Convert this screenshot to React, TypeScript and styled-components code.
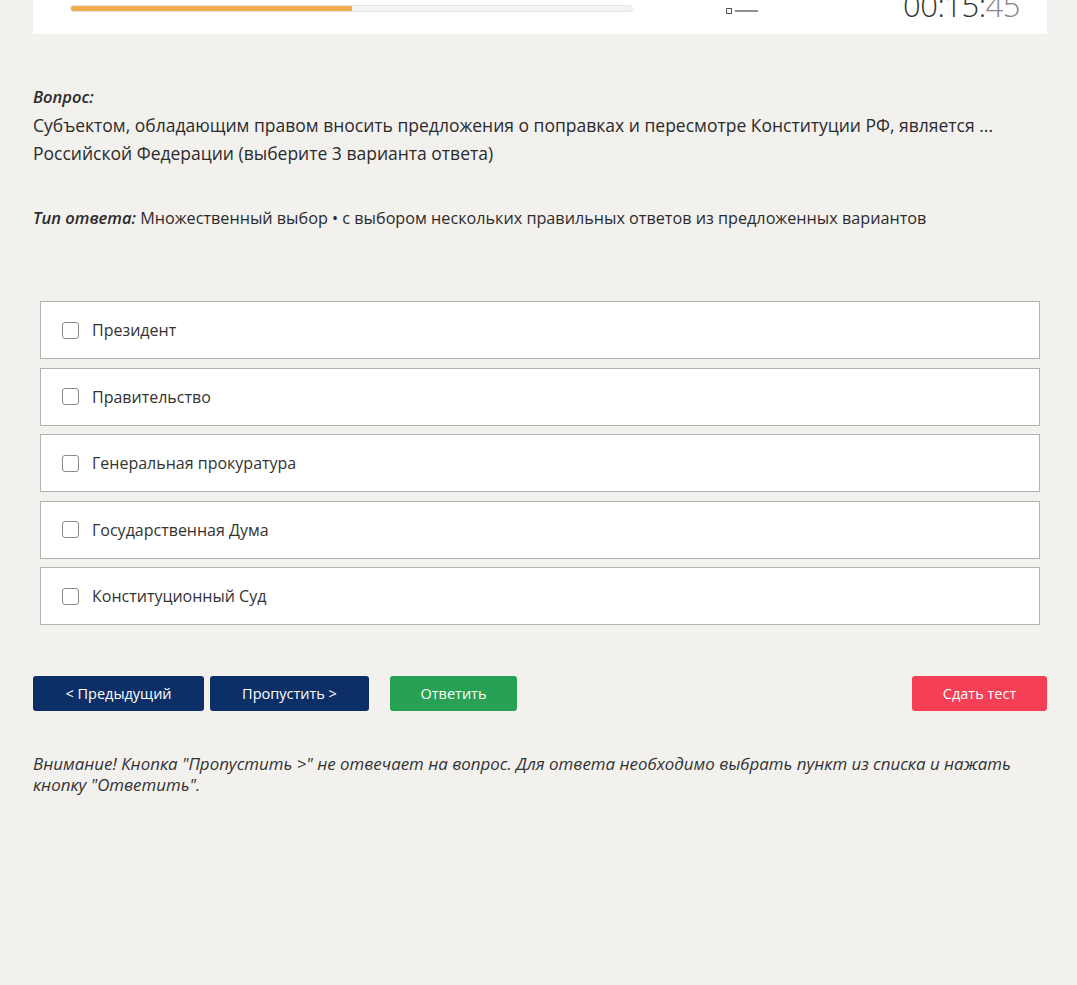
import styled, { createGlobalStyle } from 'styled-components';

const GlobalStyle = createGlobalStyle`
  html, body {
    margin: 0;
    padding: 0;
    background: #f2f1ee;
    font-family: 'Open Sans', 'Noto Sans', sans-serif;
    color: #2b2b2b;
  }
`;

const Page = styled.div`
  width: 1014px;
  margin-left: 33px;
  overflow: hidden;
`;

const HeaderCard = styled.header`
  background: #fff;
  height: 80px;
  margin-top: -46px;
  display: flex;
  align-items: flex-end;
  padding: 0 27px 22px 37px;
  box-sizing: border-box;
`;

const Progress = styled.div`
  width: 563px;
  height: 7px;
  border-radius: 4px;
  background: #f4f4f4;
  border: 1px solid #e4e4e4;
  box-sizing: border-box;
  overflow: hidden;
`;

const ProgressFill = styled.div`
  height: 100%;
  background: #f0ad4e;
`;

const ListIcon = styled.svg`
  margin-left: 93px;
  margin-bottom: -3px;
`;

const Timer = styled.div`
  margin-left: auto;
  font-size: 31px;
  font-weight: 300;
  line-height: 1;
  letter-spacing: -0.5px;
  color: #333;
  margin-bottom: -9px;

  span {
    color: #888;
  }
`;

const Question = styled.section`
  margin-top: 48px;
  font-size: 17.5px;
  line-height: 28px;
`;

const Label = styled.em`
  font-weight: 600;
  font-size: 16.5px;
`;

const AnswerType = styled.p`
  margin: 39px 0 0;
  font-size: 16.2px;
  line-height: 24px;
`;

const Options = styled.ul`
  list-style: none;
  margin: 71px 7px 0;
  padding: 0;
  display: flex;
  flex-direction: column;
  gap: 8.5px;
`;

const Option = styled.li`
  height: 58px;
  background: #fff;
  border: 1px solid #b3b3b3;
  box-sizing: border-box;
  display: flex;
  align-items: center;
  padding-left: 21px;
  font-size: 16px;
  color: #333;
`;

const Box = styled.span`
  width: 17px;
  height: 17px;
  border: 1px solid #8a8a8a;
  border-radius: 3px;
  box-sizing: border-box;
  margin-right: 13px;
  background: #fff;
`;

const Actions = styled.div`
  display: flex;
  gap: 6px;
  margin-top: 51px;
`;

const Button = styled.button<{ $tone: 'navy' | 'green' | 'red' }>`
  height: 35px;
  border: none;
  border-radius: 3px;
  font-family: inherit;
  font-size: 14.5px;
  color: #fff;
  background: ${(p) => (p.$tone === 'navy' ? '#0b2f66' : p.$tone === 'green' ? '#27a153' : '#f43f55')};
  padding: 0;
`;

const Spacer = styled.div`
  flex: 1;
`;

const Note = styled.p`
  margin: 42px 0 0;
  font-style: italic;
  font-size: 16.9px;
  line-height: 21px;
  color: #333;
`;

const options = [
  'Президент',
  'Правительство',
  'Генеральная прокуратура',
  'Государственная Дума',
  'Конституционный Суд',
];

export default function App() {
  return (
    <Page>
      <GlobalStyle />
      <HeaderCard>
        <Progress>
          <ProgressFill style={{ width: '50%' }} />
        </Progress>
        <ListIcon width="32" height="10" viewBox="0 0 32 10">
          <rect x="0.5" y="3.5" width="5" height="5" fill="none" stroke="#555" />
          <line x1="9" y1="6" x2="32" y2="6" stroke="#555" strokeWidth="1.3" />
        </ListIcon>
        <Timer>
          00:15:<span>45</span>
        </Timer>
      </HeaderCard>

      <Question>
        <Label>Вопрос:</Label>
        <br />
        Субъектом, обладающим правом вносить предложения о поправках и пересмотре Конституции РФ,
        является ... Российской Федерации (выберите 3 варианта ответа)
      </Question>

      <AnswerType>
        <Label>Тип ответа:</Label> Множественный выбор • с выбором нескольких правильных ответов из
        предложенных вариантов
      </AnswerType>

      <Options>
        {options.map((o) => (
          <Option key={o}>
            <Box />
            {o}
          </Option>
        ))}
      </Options>

      <Actions>
        <Button $tone="navy" style={{ width: 171 }}>&lt; Предыдущий</Button>
        <Button $tone="navy" style={{ width: 159 }}>Пропустить &gt;</Button>
        <Button $tone="green" style={{ width: 127, marginLeft: 15 }}>Ответить</Button>
        <Spacer />
        <Button $tone="red" style={{ width: 135 }}>Сдать тест</Button>
      </Actions>

      <Note>
        Внимание! Кнопка "Пропустить &gt;" не отвечает на вопрос. Для ответа необходимо выбрать пункт
        из списка и нажать кнопку "Ответить".
      </Note>
    </Page>
  );
}
